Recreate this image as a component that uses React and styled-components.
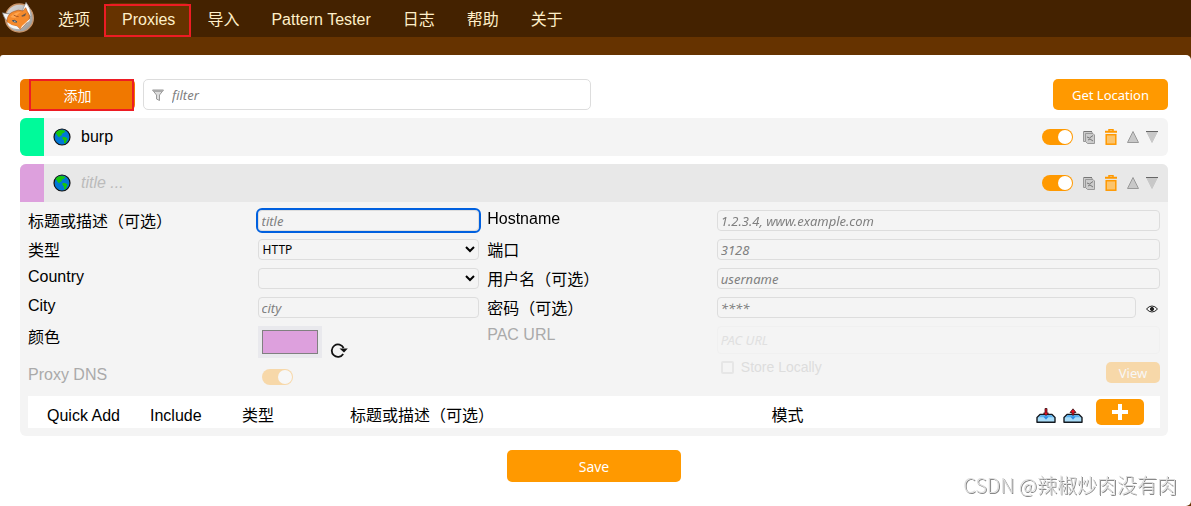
import React, { useState } from "react";
import styled, { createGlobalStyle } from "styled-components";

const menu = ["选项", "Proxies", "导入", "Pattern Tester", "日志", "帮助", "关于"];

export default function App() {
  return (
    <>
      <GlobalStyle />
      <Nav>
        <FoxLogo />
        {menu.map((name) => (
          <Tab key={name} href="#" $active={name === "Proxies"}>
            {name}
          </Tab>
        ))}
      </Nav>
      <Page>
        <Toolbar>
          <AddButton type="button">添加</AddButton>
          <Filter>
            <FilterIcon />
            <input type="text" placeholder="filter" aria-label="filter" />
          </Filter>
          <LocationButton type="button">Get Location</LocationButton>
        </Toolbar>
        <Proxy>
          <ProxyHeader color="#00fa9a" title="burp" />
        </Proxy>
        <Proxy>
          <ProxyHeader color="#dda0dd" open />
          <ProxyForm />
        </Proxy>
        <SaveButton type="button">Save</SaveButton>
      </Page>
      <Watermark>CSDN @辣椒炒肉没有肉</Watermark>
    </>
  );
}

function ProxyHeader({ color, title, open }) {
  return (
    <Summary $open={open}>
      <ColorBar $color={color} />
      <GlobeIcon />
      <Title $empty={!title}>{title || "title ..."}</Title>
      <Actions>
        <Toggle type="checkbox" defaultChecked aria-label="active" />
        <IconButton type="button" aria-label="duplicate">
          <CopyIcon />
        </IconButton>
        <IconButton type="button" aria-label="delete">
          <TrashIcon />
        </IconButton>
        <Arrows>
          <IconButton type="button" aria-label="up">
            <svg width="12" height="12" viewBox="0 0 12 12">
              <path d="M6 0.5L11.5 11.5H0.5Z" fill="#c8c8c8" stroke="#999" />
            </svg>
          </IconButton>
          <IconButton type="button" aria-label="down">
            <svg width="12" height="12" viewBox="0 0 12 12">
              <path d="M0.5 0.5H11.5L6 11.5Z" fill="#c8c8c8" stroke="#c8c8c8" />
              <path d="M0 0.5H12" stroke="#666" />
            </svg>
          </IconButton>
        </Arrows>
      </Actions>
    </Summary>
  );
}

function ProxyForm() {
  const [color, setColor] = useState("#dda0dd");

  return (
    <Details>
      <Fields>
        <Label htmlFor="title" $cjk>标题或描述（可选）</Label>
        <Input id="title" type="text" placeholder="title" autoFocus />
        <Label htmlFor="hostname">Hostname</Label>
        <Input id="hostname" type="text" placeholder="1.2.3.4, www.example.com" />

        <Label htmlFor="type" $cjk>类型</Label>
        <Select id="type">
          <option>HTTP</option>
          <option>SOCKS5</option>
        </Select>
        <Label htmlFor="port" $cjk>端口</Label>
        <Input id="port" type="text" placeholder="3128" />

        <Label htmlFor="country">Country</Label>
        <Select id="country">
          <option></option>
        </Select>
        <Label htmlFor="username" $cjk>用户名（可选）</Label>
        <Input id="username" type="text" placeholder="username" />

        <Label htmlFor="city">City</Label>
        <Input id="city" type="text" placeholder="city" />
        <Label htmlFor="password" $cjk>密码（可选）</Label>
        <Password>
          <Input id="password" type="password" placeholder="****" />
          <IconButton type="button" aria-label="show password">
            <EyeIcon />
          </IconButton>
        </Password>

        <Label htmlFor="color" $cjk>颜色</Label>
        <ColorField>
          <ColorInput
            id="color"
            type="color"
            value={color}
            onChange={(e) => setColor(e.target.value)}
          />
          <IconButton type="button" aria-label="random color">
            <ReloadIcon />
          </IconButton>
        </ColorField>
        <PacLabel htmlFor="pac" $muted>PAC URL</PacLabel>
        <Pac>
          <PacInput id="pac" type="text" placeholder="PAC URL" disabled />
          <PacOptions>
            <label>
              <input type="checkbox" disabled />
              Store Locally
            </label>
            <ViewButton type="button" disabled>View</ViewButton>
          </PacOptions>
        </Pac>

        <Label htmlFor="dns" $muted>Proxy DNS</Label>
        <DnsField>
          <Toggle id="dns" type="checkbox" defaultChecked disabled />
        </DnsField>
      </Fields>

      <Patterns>
        <thead>
          <tr>
            <th>Quick Add</th>
            <th>Include</th>
            <th>类型</th>
            <th>标题或描述（可选）</th>
            <th>模式</th>
            <th>
              <PatternActions>
                <IconButton type="button" aria-label="import">
                  <TrayIcon />
                </IconButton>
                <IconButton type="button" aria-label="export">
                  <TrayIcon up />
                </IconButton>
                <PlusButton type="button" aria-label="add pattern">
                  <svg width="16" height="16" viewBox="0 0 16 16">
                    <path d="M8 0V16M0 8H16" stroke="#fff" strokeWidth="4" />
                  </svg>
                </PlusButton>
              </PatternActions>
            </th>
          </tr>
        </thead>
      </Patterns>
    </Details>
  );
}

function FoxLogo() {
  return (
    <Logo viewBox="0 0 108 108" aria-hidden="true">
      <defs>
        <linearGradient id="disc" x1="0" y1="0" x2="1" y2="1">
          <stop offset="0" stopColor="#e0e0e0" />
          <stop offset="1" stopColor="#929292" />
        </linearGradient>
      </defs>
      <circle cx="58" cy="54" r="42" fill="url(#disc)" stroke="#c99468" strokeWidth="4" />
      <path d="M7 38L39 44L24 66Q12 56 7 38Z" fill="#f4f4f4" stroke="#666" strokeWidth="2" />
      <path d="M78 7Q94 26 93 50L67 32Z" fill="#fff" stroke="#888" strokeWidth="2" />
      <path d="M21 60Q24 41 40 35Q55 27 69 33L77 23Q81 34 88 45Q92 58 80 68L61 88L51 79Q30 78 21 67Z" fill="#f58a2c" stroke="#b05a20" strokeWidth="2" />
      <path d="M31 51Q43 36 63 36Q49 43 47 54Q38 54 31 51Z" fill="#ffa54f" />
      <path d="M21 66Q34 77 51 79L60 88Q40 88 27 78Z" fill="#f5f5f5" />
      <path d="M79 68L61 88L66 78L90 56Q90 63 79 68Z" fill="#fff" />
      <path d="M37 62Q45 58 51 66Q43 68 37 62Z" fill="#dfe6ea" stroke="#48525c" strokeWidth="3" />
      <path d="M64 47L79 39L75 48L66 50Z" fill="#6d5748" />
      <path d="M41 45Q48 50 56 50" stroke="#b25b20" strokeWidth="3" fill="none" />
    </Logo>
  );
}

function FilterIcon() {
  return (
    <svg width="12" height="12" viewBox="0 0 12 12" fill="#ddd" stroke="#999">
      <path d="M0.5 1H11.5L7.5 6V11.5L4.5 10V6Z" />
      <path d="M1 2H11" stroke="#aaa" strokeWidth="2" />
    </svg>
  );
}

function GlobeIcon() {
  return (
    <svg width="18" height="18" viewBox="0 0 18 18" aria-hidden="true">
      <circle cx="9" cy="9" r="8" fill="#0078d7" stroke="#111" strokeWidth="1.2" />
      <path d="M2.5 5Q4 2.5 7 2L11 2.2L12.5 3.5L10.5 5L9 5.5L8.5 7.5L6.5 8L7 9.5L5 8.5L3.5 6Z" fill="#16c60c" />
      <path d="M9.5 9L12 9L14.5 10.5L13.5 13L12.5 15.5L11 15V12.5L9.5 11Z" fill="#16c60c" />
    </svg>
  );
}

function CopyIcon() {
  return (
    <svg width="12" height="13" viewBox="0 0 12 13" fill="#ccc" stroke="#999">
      <path d="M0.5 0.5H8L9.5 2V10.5H0.5Z" />
      <path d="M2.5 2.5H10L11.5 4V12.5H4.5L2.5 10.5Z" />
      <path d="M1 0.5H9M4 6L6.5 7L10 4.5M5 9L7 8L10 10" stroke="#777" />
    </svg>
  );
}

function TrashIcon() {
  return (
    <svg width="12" height="16" viewBox="0 0 12 16" fill="none" stroke="#f90" strokeWidth="1.5">
      <path d="M4 2V0.8H8V2" />
      <path d="M0 2.8H12" strokeWidth="2" />
      <rect x="1.2" y="5.7" width="9.6" height="9.5" fill="#fbc46d" />
    </svg>
  );
}

function EyeIcon() {
  return (
    <svg width="12" height="8" viewBox="0 0 12 8" fill="none" stroke="#222">
      <path d="M0.5 4Q3 1 6 1Q9 1 11.5 4Q9 7 6 7Q3 7 0.5 4Z" />
      <circle cx="6" cy="4" r="1.6" fill="#222" />
    </svg>
  );
}

function ReloadIcon() {
  return (
    <svg width="18" height="16" viewBox="0 0 18 16" fill="none" stroke="#111" strokeWidth="1.8">
      <path d="M13.2 12A6.2 6.2 0 1 1 13.6 6" />
      <path d="M9.5 6.5H17.8L14 10.5Z" fill="#111" stroke="none" />
    </svg>
  );
}

function TrayIcon({ up }) {
  return (
    <svg width="20" height="16" viewBox="0 0 20 16" aria-hidden="true">
      <path d="M1 9.5L4 6.5H16L19 9.5V14.3H1Z" fill="#a9dcf8" stroke="#14191f" strokeWidth="1.4" strokeLinejoin="round" />
      <path d="M2.5 9.3L5 7H15L17.5 9.3H12.5L10 11.5L7.5 9.3Z" fill="#5bb0ee" />
      <path d="M7.5 8.5H12.5L10 11.5Z" fill="#2f8de4" />
      <path
        d={up ? "M10 0.8L13 4.5H11V7H9V4.5H7Z" : "M9 0.5H11V5H12.5L10 7.5L7.5 5H9Z"}
        fill="#e81224"
        stroke="#3a1015"
        strokeWidth="0.8"
      />
    </svg>
  );
}

const sans = `"Liberation Sans", "Noto Sans CJK SC", sans-serif`;
const control = `"Noto Sans", "Noto Sans CJK SC", sans-serif`;

const GlobalStyle = createGlobalStyle`
  * {
    box-sizing: border-box;
  }
  body {
    margin: 0;
    background: #630;
    color: #000;
    font-family: ${sans};
    font-size: 16px;
  }
  button, input, select {
    margin: 0;
    font-family: ${control};
  }
  input::placeholder {
    color: #808080;
    font-style: italic;
    opacity: 1;
  }
  svg {
    display: block;
    flex: none;
  }
`;

const Nav = styled.nav`
  display: flex;
  height: 37px;
  background: #420;
`;

const Logo = styled.svg`
  width: 36px;
  height: 36px;
  margin-right: 6px;
`;

const Tab = styled.a`
  position: relative;
  margin-top: 3px;
  padding: 0 16px;
  border-radius: 6px 6px 0 0;
  background: ${(p) => (p.$active ? "#630" : "transparent")};
  color: #ffefc8;
  line-height: 34px;
  text-decoration: none;
  white-space: nowrap;

  &::after {
    content: "";
    display: ${(p) => (p.$active ? "block" : "none")};
    position: absolute;
    inset: 1px 0 0 -2px;
    border: 2px solid #ed1c24;
  }
`;

const Page = styled.main`
  display: flex;
  flex-direction: column;
  gap: 8px;
  min-height: calc(100vh - 55px);
  margin-top: 18px;
  padding: 24px 23px 24px 20px;
  border-radius: 3px 5px 5px 0;
  background: #fff;
`;

const Toolbar = styled.div`
  display: flex;
  gap: 8px;
  height: 31px;
`;

const Button = styled.button`
  border: 0;
  border-radius: 5px;
  background: #f90;
  color: #fff;
  font-size: 14px;
`;

const AddButton = styled(Button)`
  position: relative;
  width: 115px;
  background: #f07800;

  &::after {
    content: "";
    position: absolute;
    inset: 0 1px -1px 9px;
    border: 2px solid #ed1c24;
  }
`;

const Filter = styled.label`
  display: flex;
  align-items: center;
  gap: 8px;
  width: 39%;
  padding: 0 8px;
  border: 1px solid #ddd;
  border-radius: 5px;

  input {
    flex: 1;
    padding: 0;
    border: 0;
    outline: 0;
    background: none;
    font-size: 13px;
  }
`;

const LocationButton = styled(Button)`
  width: 115px;
  margin-left: auto;
  font-size: 13px;
`;

const Proxy = styled.section`
  overflow: hidden;
  border-radius: 6px;
  background: #f4f4f4;
`;

const Summary = styled.header`
  display: flex;
  align-items: center;
  height: 38px;
  padding-right: 10px;
  background: ${(p) => (p.$open ? "#e8e8e8" : "#f4f4f4")};
`;

const ColorBar = styled.span`
  width: 24px;
  height: 100%;
  margin-right: 9px;
  background: ${(p) => p.$color};
`;

const Title = styled.span`
  flex: 1;
  padding-left: 10px;
  color: ${(p) => (p.$empty ? "#bbb" : "#000")};
  font-style: ${(p) => (p.$empty ? "italic" : "normal")};
`;

const Actions = styled.div`
  display: flex;
  align-items: center;
  gap: 10px;
`;

const Arrows = styled.div`
  display: flex;
  gap: 7px;
`;

const IconButton = styled.button`
  padding: 0;
  border: 0;
  background: none;
`;

const Toggle = styled.input`
  appearance: none;
  display: flex;
  justify-content: flex-end;
  width: 31px;
  height: 16px;
  padding: 1px;
  border-radius: 8px;
  background: #f90;

  &::before {
    content: "";
    width: 14px;
    height: 14px;
    border-radius: 50%;
    background: #fff;
  }
  &:disabled {
    opacity: 0.3;
  }
`;

const Details = styled.div`
  display: flex;
  flex-direction: column;
  gap: 8px;
  padding: 8px;
`;

const Fields = styled.div`
  display: grid;
  grid-template-columns: 1fr 1fr 1fr 2fr;
  grid-template-rows: repeat(4, 21px) 32px 22px;
  gap: 8px;
`;

const Label = styled.label`
  line-height: ${(p) => (p.$cjk ? "24px" : "17px")};
  color: ${(p) => (p.$muted ? "#aaa" : "#000")};
`;

const Input = styled.input`
  width: 100%;
  min-width: 0;
  height: 21px;
  padding: 0 3px;
  border: 1px solid #ddd;
  border-radius: 4px;
  background: none;
  font-size: 13px;

  &:focus {
    outline: 2px solid #0060df;
  }
`;

const Select = styled.select`
  width: 100%;
  height: 21px;
  border: 1px solid #ddd;
  border-radius: 4px;
  background: none;
  color: #000;
  font-size: 12px;
`;

const Password = styled.div`
  display: flex;
  gap: 10px;
  padding-right: 2px;

  ${IconButton} {
    padding-top: 3px;
  }
`;

const ColorField = styled.div`
  display: flex;
  align-items: flex-end;
  gap: 8px;
`;

const ColorInput = styled.input`
  appearance: none;
  width: 64px;
  height: 32px;
  padding: 4px;
  border: 0;
  background: #e9e9ed;

  &::-webkit-color-swatch-wrapper {
    padding: 0;
  }
  &::-webkit-color-swatch {
    border: 1px solid #808080;
    border-radius: 0;
  }
`;

const PacLabel = styled(Label)`
  grid-row: span 2;
`;

const Pac = styled.div`
  grid-row: span 2;
`;

const PacInput = styled(Input)`
  height: 28px;
  border-color: #f0f0f0;

  &::placeholder {
    color: #e0e0e0;
  }
`;

const PacOptions = styled.div`
  display: flex;
  align-items: flex-start;
  justify-content: space-between;
  padding: 8px 0 0 4px;

  label {
    display: flex;
    align-items: center;
    gap: 7px;
    height: 10px;
    color: #ddd;
    font-size: 14px;
  }
  input {
    appearance: none;
    width: 13px;
    height: 13px;
    border: 2px solid #e6e6e6;
    border-radius: 2px;
  }
`;

const ViewButton = styled(Button)`
  width: 54px;
  height: 21px;
  padding: 0;
  font-size: 13px;
  opacity: 0.3;
`;

const DnsField = styled.div`
  padding: 3px 4px;
`;

const Patterns = styled.table`
  width: 100%;
  height: 32px;
  table-layout: fixed;
  border-spacing: 0;
  background: #fff;

  th {
    padding: 8px 0 0;
    font-weight: normal;
    line-height: 24px;
    text-align: left;
    white-space: nowrap;
  }
  th:nth-child(1) {
    width: 122px;
    padding-left: 19px;
  }
  th:nth-child(2) {
    width: 92px;
  }
  th:nth-child(3) {
    width: 108px;
  }
  th:nth-child(5) {
    width: 20%;
  }
  th:last-child {
    width: 162px;
    padding: 0;
  }
`;

const PatternActions = styled.div`
  display: flex;
  align-items: flex-start;
  justify-content: flex-end;
  gap: 7px;
  padding-right: 16px;

  ${IconButton} {
    padding-top: 9px;
  }
`;

const PlusButton = styled(Button)`
  display: flex;
  align-items: center;
  justify-content: center;
  width: 48px;
  height: 26px;
  margin-left: 6px;
`;

const SaveButton = styled(Button)`
  align-self: center;
  width: 174px;
  height: 32px;
  margin-top: 6px;
`;

const Watermark = styled.div`
  position: fixed;
  right: 14px;
  bottom: 7px;
  color: #ddd;
  font-family: "Noto Sans CJK SC", sans-serif;
  font-size: 20px;
  font-weight: 300;
  line-height: 28px;
  text-shadow: 1px 1px 0 #888;
`;
